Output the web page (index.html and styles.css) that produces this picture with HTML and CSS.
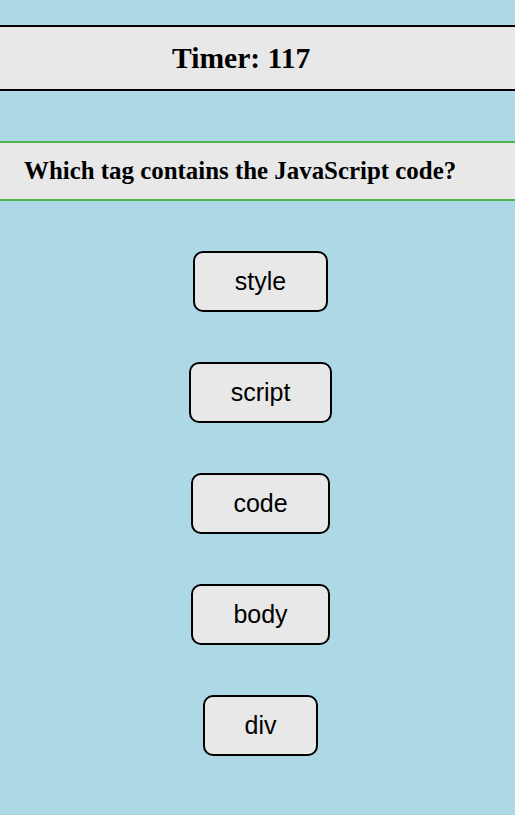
FILE: index.html
```html
<!DOCTYPE html>
<html>
<head>
<meta charset="utf-8">
<link rel="stylesheet" href="styles.css">
</head>
<body>
<div class="timer"><span class="timer-text">Timer: 117</span></div>
<div class="question">Which tag contains the JavaScript code?</div>
<div class="answers">
  <button class="answer">style</button>
  <button class="answer">script</button>
  <button class="answer">code</button>
  <button class="answer">body</button>
  <button class="answer">div</button>
</div>
</body>
</html>
```
FILE: styles.css
```css
html, body {
  margin: 0;
  padding: 0;
  background: #add8e6;
}
body {
  font-family: "Liberation Serif", "Times New Roman", serif;
  padding-top: 25px;
}
.timer {
  background: #e8e8e8;
  border-top: 2px solid #000;
  border-bottom: 2px solid #000;
  height: 62px;
  display: flex;
  align-items: center;
  padding-left: 172px;
}
.timer-text {
  font-weight: bold;
  font-size: 29.6px;
}
.question {
  margin-top: 50px;
  background: #e8e8e8;
  border-top: 2px solid #4cb54c;
  border-bottom: 2px solid #4cb54c;
  height: 56px;
  display: flex;
  align-items: center;
  padding-left: 24px;
  font-weight: bold;
  font-size: 24.9px;
}
.answers {
  display: flex;
  flex-direction: column;
  align-items: center;
  gap: 50px;
  padding-top: 50px;
  padding-left: 6px;
}
.answer {
  font-family: "Liberation Sans", Arial, sans-serif;
  font-size: 25px;
  line-height: 29px;
  padding: 14px 40px;
  background: #e8e8e8;
  border: 2px solid #000;
  border-radius: 10px;
  color: #000;
  margin: 0;
}
```
